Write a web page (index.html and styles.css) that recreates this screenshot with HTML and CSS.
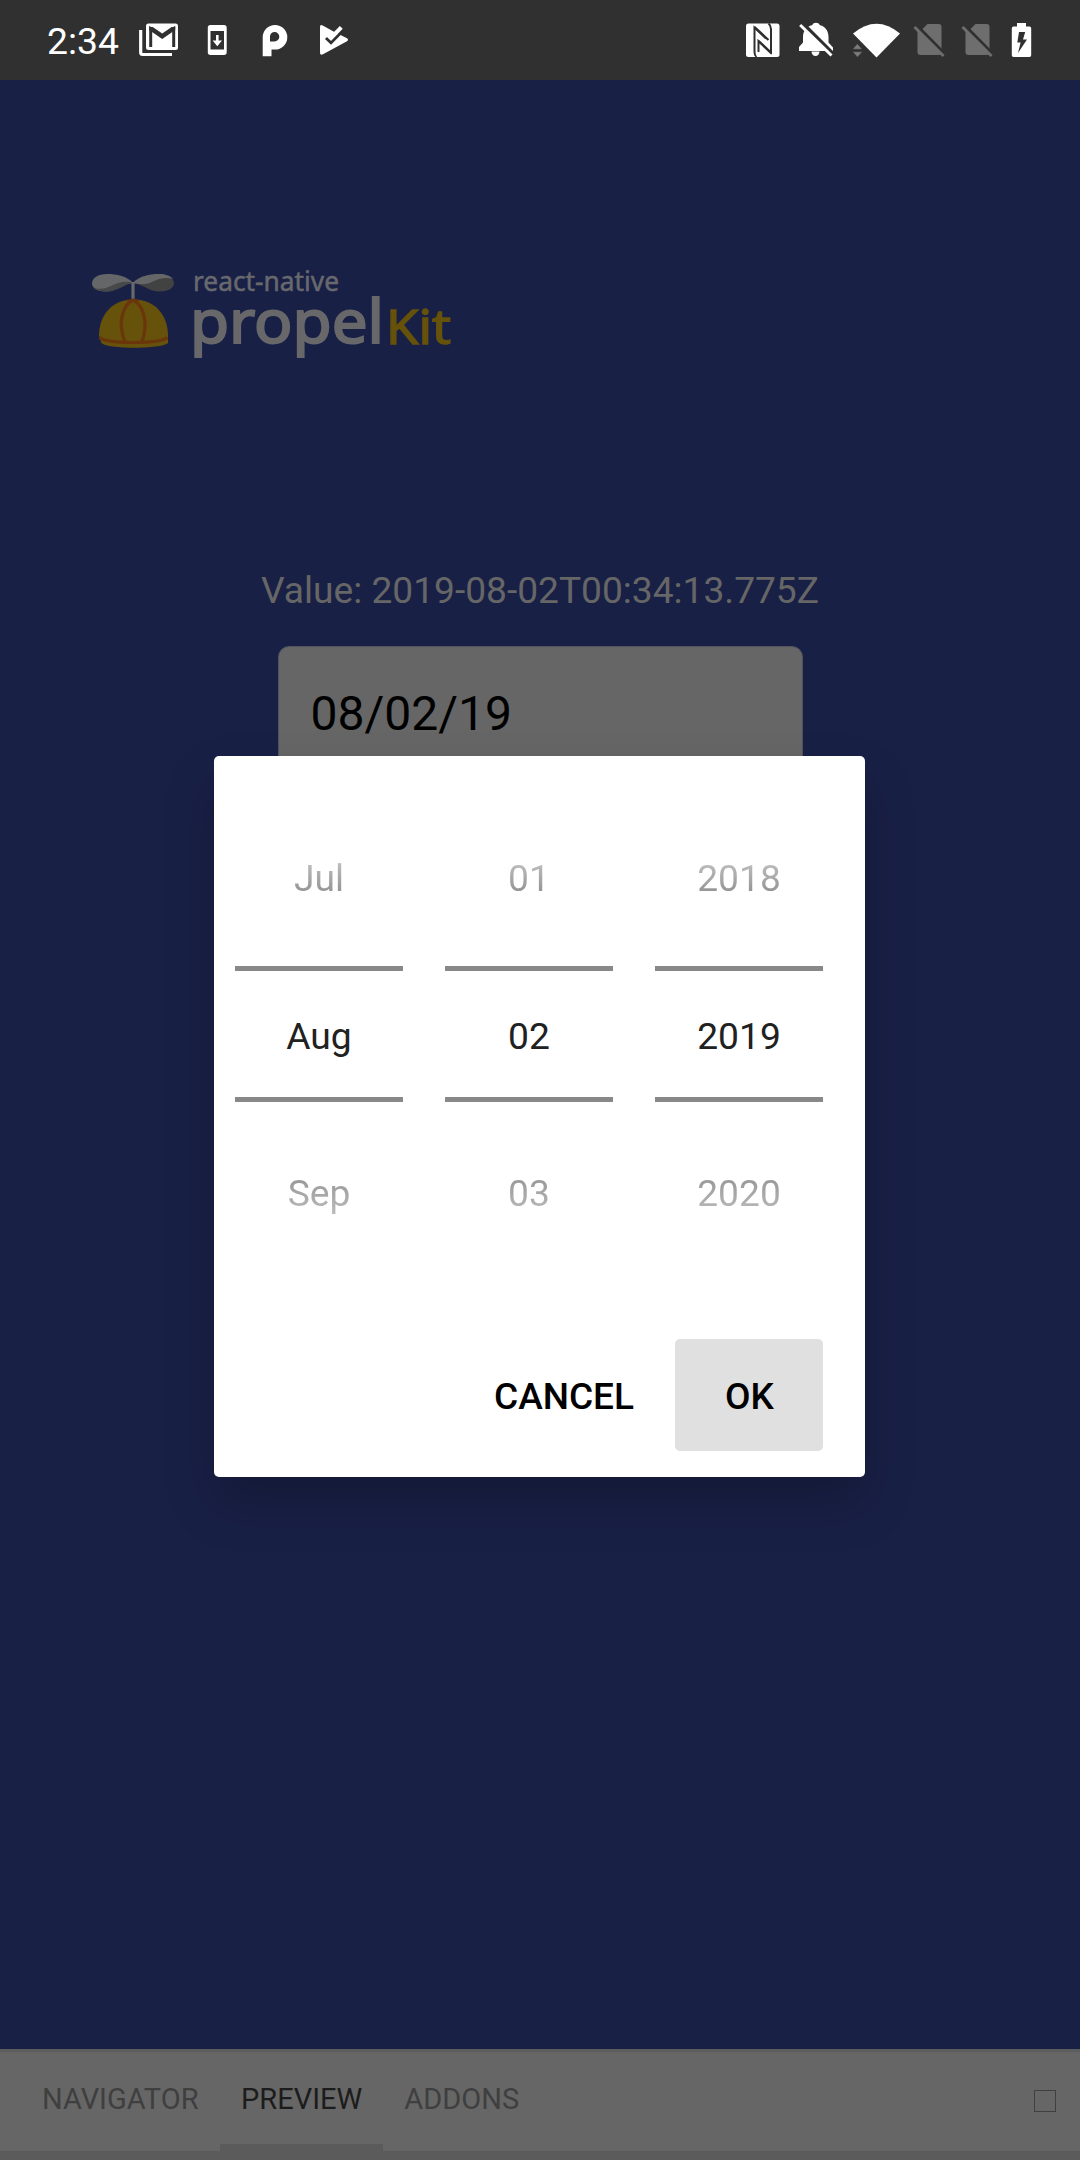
FILE: index.html
```html
<!DOCTYPE html>
<html lang="en">
<head>
<meta charset="utf-8">
<title>propelKit</title>
<link rel="stylesheet" href="styles.css">
</head>
<body>
<div class="screen">
  <header class="status">
    <span class="clock">2:34</span>
    <div class="status-left">
      <svg width="42" height="80" viewBox="138 0 42 80">
        <path d="M140.700 30v22.500q0 2 2 2H172" fill="none" stroke="#fff" stroke-width="3.200"/>
        <rect x="146" y="23.500" width="32" height="26.500" rx="2.500" fill="#fff"/>
        <path d="M150.700 47V28.500L162.200 36.500L173.700 28.500V47" fill="none" stroke="#303030" stroke-width="3"/>
        <path d="M149.200 27h3.500l9.500 6.500l9.500-6.500h3.500v3l-13 9l-13-9z" fill="#303030"/>
      </svg>
      <svg width="22" height="80" viewBox="206 0 22 80">
        <path fill="#fff" fill-rule="evenodd" d="M210.500 25h13.500a2.700 2.700 0 0 1 2.700 2.700v24.600a2.700 2.700 0 0 1-2.700 2.700h-13.500a2.700 2.700 0 0 1-2.700-2.700V27.700a2.700 2.700 0 0 1 2.700-2.700zM210.500 31v18.500h13.500V31z"/>
        <path fill="#fff" d="M216 35h2.600v5.500h3.400l-4.700 5.700l-4.700-5.700h3.400z"/>
      </svg>
      <svg width="28" height="80" viewBox="261 0 28 80">
        <path fill="#fff" fill-rule="evenodd" d="M262.700 56.300V37.200a12.300 12.300 0 1 1 12.300 12.300h-3.500v6.800zM274.600 32a4.600 4.600 0 0 0-4.600 4.600v4.800h4.600a4.700 4.700 0 0 0 0-9.400z"/>
      </svg>
      <svg width="30" height="80" viewBox="319 0 30 80">
        <path fill="#fff" d="M320 27q0-3 2.700-1.500L334 31.700L347 38.300q2 1.500 0 3L323 54.300q-3 1.200-3-1.500z"/>
        <path d="M326 38l5 4.700L344 29.500" fill="none" stroke="#303030" stroke-width="3"/>
        <path d="M329 36l2 2L341.300 27.300" fill="none" stroke="#fff" stroke-width="4"/>
      </svg>
    </div>
    <div class="status-right">
      <svg width="35" height="80" viewBox="745 0 35 80">
        <rect x="746" y="23.500" width="33.500" height="33.500" rx="2.500" fill="#fff"/>
        <path d="M756.500 57q-2-1.500-2-5V27.500L766 38.500M768.500 23.500q2.500 2 2.500 5.500V52.500L758.500 41v11" fill="none" stroke="#303030" stroke-width="2"/>
        <path d="M754.500 27l14 13M758.500 41l13 12.500" stroke="#303030" stroke-width="2.200"/>
      </svg>
      <svg width="36" height="80" viewBox="799 0 36 80">
        <path fill="#fff" d="M799 50v-3l4-4.500V37c0-6 3.500-10.500 9-11.700a4.500 4.500 0 0 1 8 0c5.500 1.200 8.500 6 8.500 11.700v5.500l4.500 5V51h-34zM811.500 51.500h8a4 4.500 0 0 1-8 0z"/>
        <path d="M803 24L833 54" stroke="#303030" stroke-width="4"/>
        <path d="M800.200 25L831.500 55.500" stroke="#fff" stroke-width="3"/>
      </svg>
      <svg width="49" height="80" viewBox="852 0 49 80">
        <path fill="#fff" d="M853 33.500Q876.500 14 900 33.500L876.500 57.500z"/>
        <path fill="#7b7b7b" stroke="#303030" stroke-width=".5" d="M852.500 49.300l4.800-5.500l5 5.500zM852.500 51.700h10l-5 5.500z"/>
      </svg>
      <svg width="33" height="80" viewBox="913 0 33 80">
        <path fill="#6e6e6e" d="M917.500 28V52a3 3 0 0 0 3 3h18a3 3 0 0 0 3-3V27a3 3 0 0 0-3-3H927.500l-5 5v4z"/>
        <path d="M917 26l28 28.500" stroke="#303030" stroke-width="3.500"/>
        <path d="M914.500 27L943.500 56" stroke="#6e6e6e" stroke-width="2.800"/>
      </svg>
      <svg width="33" height="80" viewBox="913 0 33 80">
        <path fill="#6e6e6e" d="M917.500 28V52a3 3 0 0 0 3 3h18a3 3 0 0 0 3-3V27a3 3 0 0 0-3-3H927.500l-5 5v4z"/>
        <path d="M917 26l28 28.500" stroke="#303030" stroke-width="3.500"/>
        <path d="M914.500 27L943.500 56" stroke="#6e6e6e" stroke-width="2.800"/>
      </svg>
      <svg width="21" height="80" viewBox="1011 0 21 80">
        <path fill="#fff" fill-rule="evenodd" d="M1017 23h9v3.500h3.500a1.700 1.700 0 0 1 1.700 1.700v27a1.700 1.700 0 0 1-1.700 1.700h-16a1.700 1.700 0 0 1-1.700-1.700v-27a1.700 1.700 0 0 1 1.700-1.700h3.500zM1019 32l-1.700 10.500h3.300L1018 53L1027 39.500h-4L1025.200 32z"/>
      </svg>
    </div>
  </header>

  <main class="stage">
    <svg class="logo" width="370" height="110" viewBox="85 260 370 110">
      <path fill="#646668" d="M133 283C127 276 117 274 107 274c-9 0-15 4-15 9.500c0 5 6 8 14 8c11 0 17-8 27-8.500z"/>
      <path fill="#47484a" d="M93 287c5 3.500 13 1.500 19-1.500c7-3.500 14-5 21-2.500c-9 1-15 8.500-27 8.500c-6 0-11-1.500-13-4.500z"/>
      <path fill="#424242" d="M133 283c6-7 17-9 26-9c9 0 15 4 15 9.500c0 5-7 8-14 8c-11 0-17-7-27-8.500z"/>
      <path fill="#646668" d="M133 283c6-7 17-9 26-9c6 0 12 2 14 5c-6-2-13-1-19 2c-7 3.500-13 4-21 2z"/>
      <path d="M133 282v18" stroke="#68696d" stroke-width="3.200"/>
      <path fill="#66520a" d="M99 336C99 315 112 299.500 133.500 299.500S168 315 168 336V343C162 349.300 106 349.300 101.500 343z"/>
      <path d="M99.500 337.500q6 5 34 5t34-5" fill="none" stroke="#6b350c" stroke-width="3"/>
      <path d="M125 342C117 322 123 305 133 300C143 305 149 322 142 342" fill="none" stroke="#6b350c" stroke-width="3.200"/>
      <path d="M127 300.500h12" stroke="#6b350c" stroke-width="2"/>
      <text class="logo-sub" x="193" y="291" textLength="146" lengthAdjust="spacingAndGlyphs">react-native</text>
      <text class="logo-name" x="190" y="342.500" textLength="194" lengthAdjust="spacingAndGlyphs">propel</text>
      <text class="logo-kit" x="386" y="344" textLength="65" lengthAdjust="spacingAndGlyphs">Kit</text>
    </svg>
    <p class="value">Value: 2019-08-02T00:34:13.775Z</p>
    <div class="field">08/02/19</div>

    <section class="dialog">
      <div class="pickers">
        <div class="picker">
          <span class="option prev">Jul</span>
          <span class="option current">Aug</span>
          <span class="option next">Sep</span>
        </div>
        <div class="picker">
          <span class="option prev">01</span>
          <span class="option current">02</span>
          <span class="option next">03</span>
        </div>
        <div class="picker">
          <span class="option prev">2018</span>
          <span class="option current">2019</span>
          <span class="option next">2020</span>
        </div>
      </div>
      <div class="actions">
        <button class="button">CANCEL</button>
        <button class="button pressed">OK</button>
      </div>
    </section>
  </main>

  <nav class="tabs">
    <span class="tab">NAVIGATOR</span>
    <span class="tab active">PREVIEW</span>
    <span class="tab">ADDONS</span>
    <span class="box"></span>
  </nav>
</div>
</body>
</html>
```
FILE: styles.css
```css
* { box-sizing: border-box; }

body {
  margin: 0;
  font-family: Roboto, sans-serif;
}

.screen {
  width: 1080px;
  height: 2160px;
  display: flex;
  flex-direction: column;
  background: #192046;
  overflow: hidden;
}

.status {
  height: 80px;
  flex: none;
  display: flex;
  background: #303030;
  color: #fff;
}

.status svg { display: block; flex: none; }

.clock {
  width: 138px;
  padding-left: 47px;
  font-size: 37.3px;
  line-height: 83px;
}

.status-left { display: flex; }
.status-left svg:nth-child(2) { margin-left: 26px; }
.status-left svg:nth-child(3) { margin-left: 33px; }
.status-left svg:nth-child(4) { margin-left: 30px; }

.status-right { display: flex; margin-left: auto; padding-right: 48px; }
.status-right svg:nth-child(2) { margin-left: 19px; }
.status-right svg:nth-child(3) { margin-left: 17px; }
.status-right svg:nth-child(4) { margin-left: 12px; }
.status-right svg:nth-child(5) { margin-left: 15px; }
.status-right svg:nth-child(6) { margin-left: 17px; }

.stage {
  position: relative;
  flex: 1;
  display: flex;
  flex-direction: column;
  align-items: center;
}

.logo {
  display: block;
  align-self: flex-start;
  margin: 180px 0 0 85px;
  font-family: "Noto Sans", sans-serif;
}

.logo-sub { font-size: 27.5px; fill: #68696d; stroke: #68696d; stroke-width: .5px; }
.logo-name { font-size: 59.5px; fill: #68686a; stroke: #68686a; stroke-width: 2px; }
.logo-kit { font-size: 47px; fill: #66520a; stroke: #66520a; stroke-width: 1.4px; }

.value {
  margin: 199px 0 0;
  font-size: 37.15px;
  line-height: 44px;
  color: #666;
}

.field {
  width: 525px;
  height: 136px;
  margin-top: 33px;
  padding: 33px 0 0 32px;
  border: 1px solid #50525f;
  border-radius: 11px;
  background: #666;
  color: #000;
  font-size: 48px;
  line-height: 68px;
}

.dialog {
  position: absolute;
  left: 214px;
  top: 676px;
  width: 651px;
  height: 721px;
  padding: 52px 42px 26px 21px;
  display: flex;
  flex-direction: column;
  justify-content: space-between;
  border-radius: 5px;
  background: #fff;
  box-shadow: 0 26px 50px rgba(0, 0, 0, .22);
}

.pickers { display: flex; gap: 42px; }

.picker {
  width: 168px;
  display: flex;
  flex-direction: column;
  text-align: center;
  font-size: 37.2px;
}

.option { line-height: 140px; height: 158px; }

.current {
  height: 136px;
  line-height: 131px;
  border: solid #888;
  border-width: 5px 0;
  color: #212121;
}

.prev, .next {
  color: transparent;
  -webkit-background-clip: text;
  background-clip: text;
}

.prev { background-image: linear-gradient(#e8e8e8 0, #bcbcbc 56px, #949494 84px, #888 100%); }
.next {
  line-height: 183px;
  background-image: linear-gradient(#888 0, #989898 77px, #b6b6b6 106px, #e8e8e8 100%);
}

.actions { display: flex; justify-content: flex-end; }

.button {
  height: 112px;
  padding: 3px 0 0;
  margin: 0 41px 0 0;
  border: 0;
  background: none;
  color: #000;
  font: 500 37px Roboto, sans-serif;
}

.pressed {
  width: 148px;
  margin: 0;
  padding-left: 1px;
  border-radius: 5px;
  background: #e0e0e0;
}

.tabs {
  height: 111px;
  flex: none;
  display: flex;
  padding: 0 24px 0 21px;
  border-top: 3px solid #5d5d5d;
  border-bottom: 9px solid #5b5b5b;
  background: #666;
  color: #3f3f3f;
  font-size: 29px;
  line-height: 94px;
}

.tab { padding: 0 21px; }
.tab:first-child { padding-right: 21.5px; }
.active { color: #1c1c1c; border-bottom: 7px solid #5b5b5b; }

.box {
  width: 22px;
  height: 22px;
  margin: 38px 0 0 auto;
  border: 1.5px solid #404040;
}
```
